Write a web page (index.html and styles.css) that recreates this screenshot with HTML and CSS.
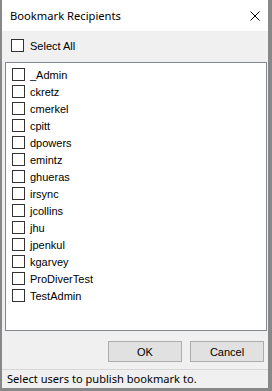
FILE: index.html
```html
<!DOCTYPE html>
<html>
<head>
<meta charset="utf-8">
<link rel="stylesheet" href="styles.css">
</head>
<body>
<div class="window">
  <div class="titlebar">
    <span class="title">Bookmark Recipients</span>
    <svg class="close" width="10" height="10" viewBox="0 0 10 10">
      <path d="M0.5 0.5 L9.5 9.5 M9.5 0.5 L0.5 9.5" stroke="#000" stroke-width="1" fill="none"/>
    </svg>
  </div>
  <div class="content">
    <div class="select-all">
      <span class="box"></span>
      <span class="label">Select All</span>
    </div>
    <div class="list">
      <div class="item"><span class="box"></span><span class="label">_Admin</span></div>
      <div class="item"><span class="box"></span><span class="label">ckretz</span></div>
      <div class="item"><span class="box"></span><span class="label">cmerkel</span></div>
      <div class="item"><span class="box"></span><span class="label">cpitt</span></div>
      <div class="item"><span class="box"></span><span class="label">dpowers</span></div>
      <div class="item"><span class="box"></span><span class="label">emintz</span></div>
      <div class="item"><span class="box"></span><span class="label">ghueras</span></div>
      <div class="item"><span class="box"></span><span class="label">irsync</span></div>
      <div class="item"><span class="box"></span><span class="label">jcollins</span></div>
      <div class="item"><span class="box"></span><span class="label">jhu</span></div>
      <div class="item"><span class="box"></span><span class="label">jpenkul</span></div>
      <div class="item"><span class="box"></span><span class="label">kgarvey</span></div>
      <div class="item"><span class="box"></span><span class="label">ProDiverTest</span></div>
      <div class="item"><span class="box"></span><span class="label">TestAdmin</span></div>
    </div>
    <div class="buttons">
      <button class="btn">OK</button>
      <button class="btn">Cancel</button>
    </div>
  </div>
  <div class="status">Select users to publish bookmark to.</div>
</div>
</body>
</html>
```
FILE: styles.css
```css
html, body {
  margin: 0;
  padding: 0;
}
body {
  width: 272px;
  height: 391px;
  overflow: hidden;
  background: #888888;
}
.window {
  box-sizing: border-box;
  width: 272px;
  height: 391px;
  border-left: 2px solid #888888;
  border-right: 4px solid #888888;
  border-bottom: 3px solid #888888;
  display: flex;
  flex-direction: column;
  background: #f0f0f0;
}
.titlebar {
  height: 31px;
  flex: none;
  background: #ffffff;
  display: flex;
  align-items: center;
  justify-content: space-between;
  padding: 0 8px 0 8px;
}
.title {
  font-family: "Noto Sans", "Open Sans", sans-serif;
  font-size: 11.2px;
  color: #000;
  margin-top: -1px;
}
.close {
  display: block;
  margin-top: 1px;
}
.content {
  flex: 1;
  display: flex;
  flex-direction: column;
  font-family: "Liberation Sans", Arial, sans-serif;
  font-size: 11px;
  color: #000;
}
.select-all {
  display: flex;
  align-items: center;
  height: 13px;
  margin: 8px 0 0 9px;
}
.box {
  box-sizing: border-box;
  width: 13px;
  height: 13px;
  flex: none;
  border: 1px solid #333333;
  background: #ffffff;
}
.select-all .label {
  margin-left: 6px;
}
.list {
  box-sizing: border-box;
  margin: 10px 1px 0 3px;
  height: 269px;
  border: 1px solid #828790;
  background: #ffffff;
  padding-top: 3px;
}
.item {
  display: flex;
  align-items: center;
  height: 17px;
  padding-left: 6px;
}
.item .label {
  margin-left: 5px;
}
.buttons {
  display: flex;
  justify-content: flex-end;
  gap: 8px;
  margin: 10px 4px 0 0;
}
.btn {
  box-sizing: border-box;
  width: 74px;
  height: 21px;
  margin: 0;
  padding: 0;
  background: #e1e1e1;
  border: 1px solid #adadad;
  font-family: "Liberation Sans", Arial, sans-serif;
  font-size: 11px;
  color: #000;
}
.status {
  flex: none;
  height: 18px;
  border-top: 1px solid #d7d7d7;
  font-family: "Noto Sans", "Open Sans", sans-serif;
  font-size: 11.1px;
  line-height: 17px;
  padding-left: 5px;
  color: #000;
  white-space: nowrap;
}
```
